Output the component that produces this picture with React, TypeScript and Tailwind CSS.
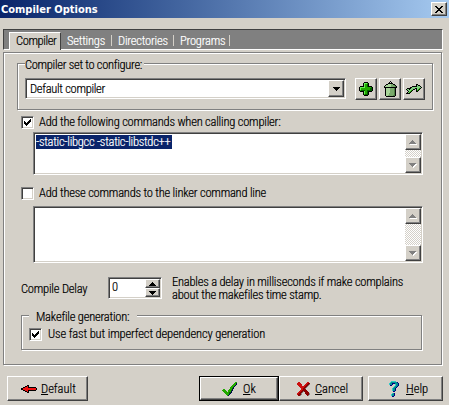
import type { ReactNode } from "react";

const colors: Record<string, string> = {
  k: "#000000", g: "#22a800", l: "#66ee55", d: "#006000", n: "#000050",
  r: "#cc1010", R: "#ee1010", m: "#8b0000", t: "#009090", c: "#30c8c8", b: "#000080",
  s: "#79a96b", p: "#a8d498", q: "#4f7f46", a: "#7fd07f", x: "#808080", w: "#ffffff",
};

function Pixels({ rows, className = "" }: { rows: string[]; className?: string }) {
  const width = Math.max(...rows.map((r) => r.length));
  return (
    <svg width={width} height={rows.length} viewBox={`0 0 ${width} ${rows.length}`} shapeRendering="crispEdges" className={"block shrink-0 " + className}>
      {rows.flatMap((row, y) =>
        [...row].map((ch, x) => (colors[ch] ? <rect key={`${x}-${y}`} x={x} y={y} width="1" height="1" fill={colors[ch]} /> : null)),
      )}
    </svg>
  );
}

const plus = [
  ".....kkkk.....",
  "....klllgk....",
  "....klggdk....",
  "....klggdk....",
  ".kkkklggdkkkk.",
  "klllllggggggdk",
  "klgggggggggddk",
  "klgggggggggddk",
  "kgddddggdddddk",
  ".kkkklggdkkkk.",
  "....klggdk....",
  "....klggdk....",
  "....kgdddk....",
  ".....kkkk.....",
];
const trash = [
  "......k......",
  ".....k.k.....",
  "....kkkkk....",
  "..kkpppsskk..",
  ".kpppppsssqk.",
  "kppppppssssqk",
  "kkkkkkkkkkkkk",
  ".kppppssssqk.",
  ".kppppssssqk.",
  ".kppppssssqk.",
  ".kppppssssqk.",
  ".kppppssssqk.",
  ".kpppsssssqk.",
  ".kpppsssssqk.",
  ".kppsssssqqk.",
  "..kkkkkkkkk..",
];
const share = [
  "..........kk....",
  "..........kakk..",
  "......kkkkkaaak.",
  "....kkaaaaaaaaak",
  ".kkkkaaaakkaagk.",
  "kaakaaakk.kagk..",
  ".kaaagk...kgk...",
  "..kagk....kk....",
  ".kagk...........",
  "kkkk............",
];
const redArrow = [
  "......kk........",
  "....kkRk........",
  "..kkRRRkkkkkkkk.",
  "kkRRRRRRRRRRRRRk",
  "kkRRRRRRRRRRRRRk",
  "..kkRRRkkkkkkkk.",
  "....kkRk........",
  "......kk........",
];
const cross = [
  ".rr.......rr.",
  "rrrr.....rrmm",
  "rrrrr...rrmmx",
  ".rrrr..rrmmx.",
  "..rrrrrrmmx..",
  "...rrrrmmx...",
  "....rrmmx....",
  "....rrmmm....",
  "...rrmmmmm...",
  "..rrmmxmmmm..",
  ".rrmmx..mmmm.",
  "rrmmx...mmmmx",
  "rmmmx....mmmx",
  ".mmx......mx.",
];
const help = [
  "...ccccc...",
  "..cttttttb.",
  ".cttbbbtttb",
  ".cttb..cttb",
  "..bb...cttb",
  "......cttb.",
  ".....cttb..",
  "....cttb...",
  "....cttb...",
  "....cttb...",
  ".....bb....",
  "...........",
  "....ctb....",
  "...cttb....",
  "...cttb....",
  "....bb.....",
];
const check = [
  ".............gg.",
  "............ggn.",
  "...........gggn.",
  "..........gggn..",
  ".........gggn...",
  "........gggn....",
  "........ggdn....",
  ".gg....gggn.....",
  "gggg..gggdn.....",
  ".gggg.gggn......",
  "..gggggddn......",
  "...ggggdn.......",
  "....gggn........",
  ".....gn.........",
];
const tick = ["......k", ".....kk", "k...kkk", "kk.kkk.", "kkkkk..", ".kkk...", "..k...."];
const closeX = ["kk....kk", ".kk..kk.", "..kkkk..", "...kk...", "..kkkk..", ".kk..kk.", "kk....kk"];
const down = ["kkkkkkk", ".kkkkk.", "..kkk..", "...k..."];
const up = ["...k...", "..kkk..", ".kkkkk.", "kkkkkkk"];
const grayUp = ["...x....", "..xxx...", ".xxxxx..", "xxxxxxx.", ".wwwwwww"];
const grayDown = ["xxxxxxx.", ".xxxxxww", "..xxxww.", "...xww..", "....w..."];

const raised = "border border-t-white border-l-white border-r-[#404040] border-b-[#404040] shadow-[inset_-1px_-1px_0_#808080] bg-[#d4d0c8]";
const sunken = "border border-t-[#808080] border-l-[#808080] border-r-white border-b-white bg-white shadow-[inset_1px_1px_0_#404040,inset_-1px_-1px_0_#d4d0c8] p-px";
const etched = "border border-[#808080] shadow-[1px_1px_0_white,inset_1px_1px_0_white]";

function CheckBox({ checked }: { checked?: boolean }) {
  return <span className={`flex size-[13px] shrink-0 items-center justify-center ${sunken}`}>{checked && <Pixels rows={tick} />}</span>;
}

function ScrollBox({ className, children }: { className: string; children?: ReactNode }) {
  return (
    <div className={`flex justify-between ${sunken} ${className}`}>
      <div>{children}</div>
      <div className="flex w-4 flex-col justify-between bg-[repeating-conic-gradient(#d4d0c8_0_25%,white_0_50%)] bg-size-[2px_2px]">
        <span className={`flex size-4 items-center justify-center ${raised}`}><Pixels rows={grayUp} /></span>
        <span className={`flex size-4 items-center justify-center ${raised}`}><Pixels rows={grayDown} /></span>
      </div>
    </div>
  );
}

export default function App() {
  return (
    <div className="h-[405px] w-[449px] overflow-hidden bg-[#d4d0c8] font-['Roboto',sans-serif] text-[12.5px] leading-[14px] font-light tracking-[-0.22px] whitespace-nowrap text-black font-stretch-[75%] [-webkit-text-stroke:0.2px]">
      <header className="flex h-[18px] items-center justify-between bg-linear-to-r from-[#0a246a] to-[#a6caf0] pr-0.5 pl-px">
        <h1 className="mt-px font-['DejaVu_Sans_Condensed',sans-serif] text-[11px] font-bold tracking-normal text-white [-webkit-text-stroke:0px]">Compiler Options</h1>
        <button className={`flex h-[14px] w-4 items-center justify-center ${raised}`}><Pixels rows={closeX} /></button>
      </header>

      <nav className="mt-[11px] ml-[3px] flex h-[21px] w-[440px] items-start border border-t-[#404040] border-r-white border-b-white border-l-[#404040] bg-[#808080] pt-[2px] pl-[5px] text-white">
        <span className="h-[18px] w-[52px] shrink-0 border-t border-r border-l border-t-white border-r-[#404040] border-l-white bg-[#d4d0c8] pt-px pl-[6px] tracking-[-0.4px] text-black">Compiler</span>
        <span className="mt-[2px] ml-[6px] w-[44px]">Settings</span>
        <span className="mt-[3px] h-[11px] w-[7px] border-l border-[#d4d0c8]" />
        <span className="mt-[2px] w-[55px]">Directories</span>
        <span className="mt-[3px] h-[11px] w-[7px] border-l border-[#d4d0c8]" />
        <span className="mt-[2px] w-[49px]">Programs</span>
        <span className="mt-[3px] h-[11px] w-px bg-[#d4d0c8]" />
      </nav>

      <main className={`mt-[2px] ml-[3px] flex h-[313px] w-[439px] flex-col pt-[10px] pl-[13px] ${etched}`}>
        <section className={`h-[47px] w-[416px] shrink-0 pl-[7px] tracking-[-0.3px] ${etched}`}>
          <div className="-mt-[6px] w-[119px] bg-[#d4d0c8]">Compiler set to configure:</div>
          <div className="mt-[6px] flex">
            <div className={`flex h-[21px] w-[321px] justify-between ${sunken}`}>
              <span className="pt-[2px] pl-[3px]">Default compiler</span>
              <span className={`flex h-[17px] w-4 items-center justify-center ${raised}`}><Pixels rows={down} /></span>
            </div>
            <div className="ml-[9px] flex gap-[2px]">
              <button className={`flex size-[22px] items-center justify-center ${raised}`}><Pixels rows={plus} /></button>
              <button className={`flex size-[22px] items-center justify-center ${raised}`}><Pixels rows={trash} /></button>
              <button className={`flex size-[22px] items-center justify-center ${raised}`}><Pixels rows={share} /></button>
            </div>
          </div>
        </section>

        <label className="mt-[5px] ml-[4px] flex items-center gap-[5px]"><CheckBox checked />Add the following commands when calling compiler:</label>
        <ScrollBox className="mt-[3px] ml-[16px] h-[43px] w-[390px] shrink-0">
          <span className="mt-px ml-px block h-[14px] w-[136px] bg-[#0a246a] tracking-[-0.28px] text-white">-static-libgcc -static-libstdc++</span>
        </ScrollBox>
        <label className="mt-[11px] ml-[4px] flex items-center gap-[5px]"><CheckBox />Add these commands to the linker command line</label>
        <ScrollBox className="mt-[6px] ml-[16px] h-[57px] w-[390px] shrink-0" />

        <div className="mt-[12px] ml-[4px] flex h-[26px] shrink-0">
          <span className="mt-[7px] w-[87px] shrink-0">Compile Delay</span>
          <div className={`mt-[2px] flex h-[22px] w-[54px] shrink-0 justify-between ${sunken}`}>
            <span className="pt-px pl-[2px]">0</span>
            <div className="flex w-[15px] flex-col">
              <span className={`flex h-[9px] items-center justify-center ${raised}`}><Pixels rows={up} /></span>
              <span className={`flex h-[9px] items-center justify-center ${raised}`}><Pixels rows={down} /></span>
            </div>
          </div>
          <div className="ml-[10px] flex flex-col leading-[13px]">
            <span>Enables a delay in milliseconds if make complains</span>
            <span>about the makefiles time stamp.</span>
          </div>
        </div>

        <section className={`mt-[14px] ml-[4px] h-[35px] w-[401px] shrink-0 ${etched}`}>
          <div className="-mt-[6px] ml-[7px] w-[108px] bg-[#d4d0c8] pl-[7px]">Makefile generation:</div>
          <label className="mt-[3px] ml-[7px] flex items-center gap-[6px] tracking-[-0.14px]"><CheckBox checked />Use fast but imperfect dependency generation</label>
        </section>
      </main>

      <footer className="mt-[11px] ml-[7px] flex h-[25px] tracking-normal">
        <button className={`flex w-[81px] items-center gap-[4px] pl-[13px] ${raised}`}><Pixels rows={redArrow} /><span><u>D</u>efault</span></button>
        <div className="ml-[111px] flex w-[80px] border border-black">
          <button className={`flex flex-1 items-center gap-[5px] pl-[21px] ${raised}`}><Pixels rows={check} /><span><u>O</u>k</span></button>
        </div>
        <button className={`flex w-[84px] items-center gap-[5px] pl-[17px] ${raised}`}><Pixels rows={cross} /><span><u>C</u>ancel</span></button>
        <button className={`ml-[5px] flex w-[75px] items-center gap-[7px] pl-[19px] ${raised}`}><Pixels rows={help} /><span><u>H</u>elp</span></button>
      </footer>
    </div>
  );
}
